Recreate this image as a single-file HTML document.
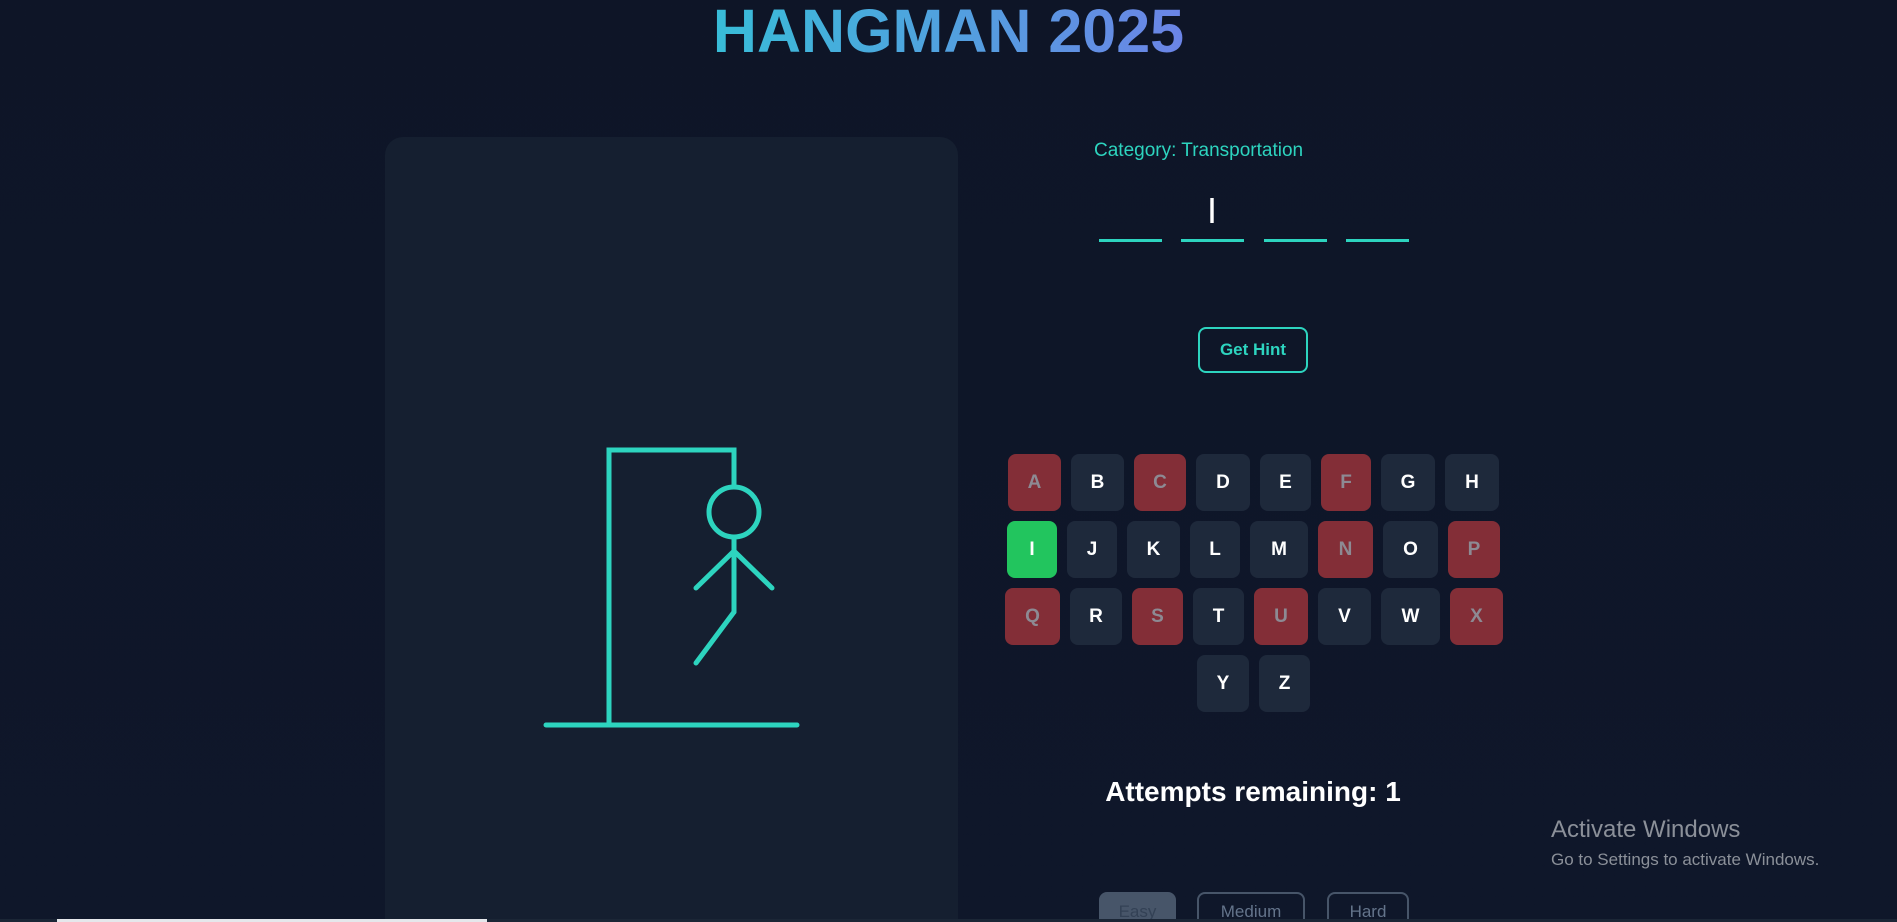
<!DOCTYPE html>
<html style="overflow:hidden;width:1897px;height:922px"><head><meta charset="utf-8"><style>
*{margin:0;padding:0;box-sizing:border-box}
body{width:1897px;height:922px;overflow:hidden;background:#0f172a;background:linear-gradient(#0e1527,#0f172a);font-family:"Liberation Sans",sans-serif;position:relative}
.a{position:absolute}
h1{position:absolute;left:0;width:1897px;top:-4px;text-align:center;font-size:61px;font-weight:bold;}
h1 span{background:linear-gradient(90deg,#38bdd8,#6b84e6);-webkit-background-clip:text;background-clip:text;color:transparent}
.panel{left:385px;top:137px;width:573px;height:785px;background:#151f30;border-radius:18px 18px 0 0}
.cat{left:1094px;top:140px;font-size:19px;color:#2dd4bf}
.bl{height:3px;width:63px;background:#2dd4bf;top:239px}
.hint{left:1198px;top:327px;width:110px;height:46px;border:2px solid #2dd4bf;border-radius:8px;color:#2dd4bf;font-weight:bold;font-size:17px;text-align:center;line-height:42px}
.k{height:57px;border-radius:8px;background:#1e293b;color:#fff;font-weight:bold;font-size:19px;text-align:center;line-height:57px}
.r{background:#832e37;color:#8d8a93}
.g{background:#22c55e}
.att{left:0;width:2506px;text-align:center;top:776px;font-size:28px;font-weight:bold;color:#fff}
.d{top:892px;height:40px;border-radius:8px;border:2px solid #475569;color:#64748b;font-size:17px;text-align:center;line-height:36px}
</style></head><body>
<h1><span>HANGMAN 2025</span></h1>
<div class="a panel"></div>
<svg class="a" style="left:0;top:0" width="1897" height="922">
<g stroke="#2dd4bf" stroke-width="5" stroke-linecap="round" fill="none">
<line x1="546" y1="725" x2="797" y2="725"/>
<polyline points="609,725 609,450 734,450 734,485"/>
<circle cx="734" cy="512" r="25"/>
<line x1="734" y1="538" x2="734" y2="612"/>
<line x1="734" y1="551" x2="696" y2="588"/>
<line x1="734" y1="551" x2="772" y2="588"/>
<line x1="734" y1="612" x2="696" y2="663"/>
</g></svg>
<div class="a cat">Category: Transportation</div>
<div class="a" style="left:1207px;top:190px;font-size:36px;color:#fff">I</div>
<div class="a bl" style="left:1099px"></div>
<div class="a bl" style="left:1181px"></div>
<div class="a bl" style="left:1264px"></div>
<div class="a bl" style="left:1346px"></div>
<div class="a hint">Get Hint</div>

<div class="a k r" style="left:1008px;top:454px;width:53px">A</div>
<div class="a k" style="left:1071px;top:454px;width:53px">B</div>
<div class="a k r" style="left:1134px;top:454px;width:52px">C</div>
<div class="a k" style="left:1196px;top:454px;width:54px">D</div>
<div class="a k" style="left:1260px;top:454px;width:51px">E</div>
<div class="a k r" style="left:1321px;top:454px;width:50px">F</div>
<div class="a k" style="left:1381px;top:454px;width:54px">G</div>
<div class="a k" style="left:1445px;top:454px;width:54px">H</div>

<div class="a k g" style="left:1007px;top:521px;width:50px">I</div>
<div class="a k" style="left:1067px;top:521px;width:50px">J</div>
<div class="a k" style="left:1127px;top:521px;width:53px">K</div>
<div class="a k" style="left:1190px;top:521px;width:50px">L</div>
<div class="a k" style="left:1250px;top:521px;width:58px">M</div>
<div class="a k r" style="left:1318px;top:521px;width:55px">N</div>
<div class="a k" style="left:1383px;top:521px;width:55px">O</div>
<div class="a k r" style="left:1448px;top:521px;width:52px">P</div>

<div class="a k r" style="left:1005px;top:588px;width:55px">Q</div>
<div class="a k" style="left:1070px;top:588px;width:52px">R</div>
<div class="a k r" style="left:1132px;top:588px;width:51px">S</div>
<div class="a k" style="left:1193px;top:588px;width:51px">T</div>
<div class="a k r" style="left:1254px;top:588px;width:54px">U</div>
<div class="a k" style="left:1318px;top:588px;width:53px">V</div>
<div class="a k" style="left:1381px;top:588px;width:59px">W</div>
<div class="a k r" style="left:1450px;top:588px;width:53px">X</div>

<div class="a k" style="left:1197px;top:655px;width:52px">Y</div>
<div class="a k" style="left:1259px;top:655px;width:51px">Z</div>

<div class="a att">Attempts remaining: 1</div>
<div class="a d" style="left:1099px;width:77px;background:#475569;color:#334155">Easy</div>
<div class="a d" style="left:1197px;width:108px">Medium</div>
<div class="a d" style="left:1327px;width:82px">Hard</div>

<div class="a" style="left:1551px;top:816px;font-size:24px;color:#8b9099">Activate Windows</div>
<div class="a" style="left:1551px;top:850px;font-size:17px;color:#8b9099">Go to Settings to activate Windows.</div>
<div class="a" style="left:0;top:919px;width:1897px;height:3px;background:#1b2636"></div>
<div class="a" style="left:57px;top:919px;width:430px;height:3px;background:#e5e7eb"></div>
</body></html>
